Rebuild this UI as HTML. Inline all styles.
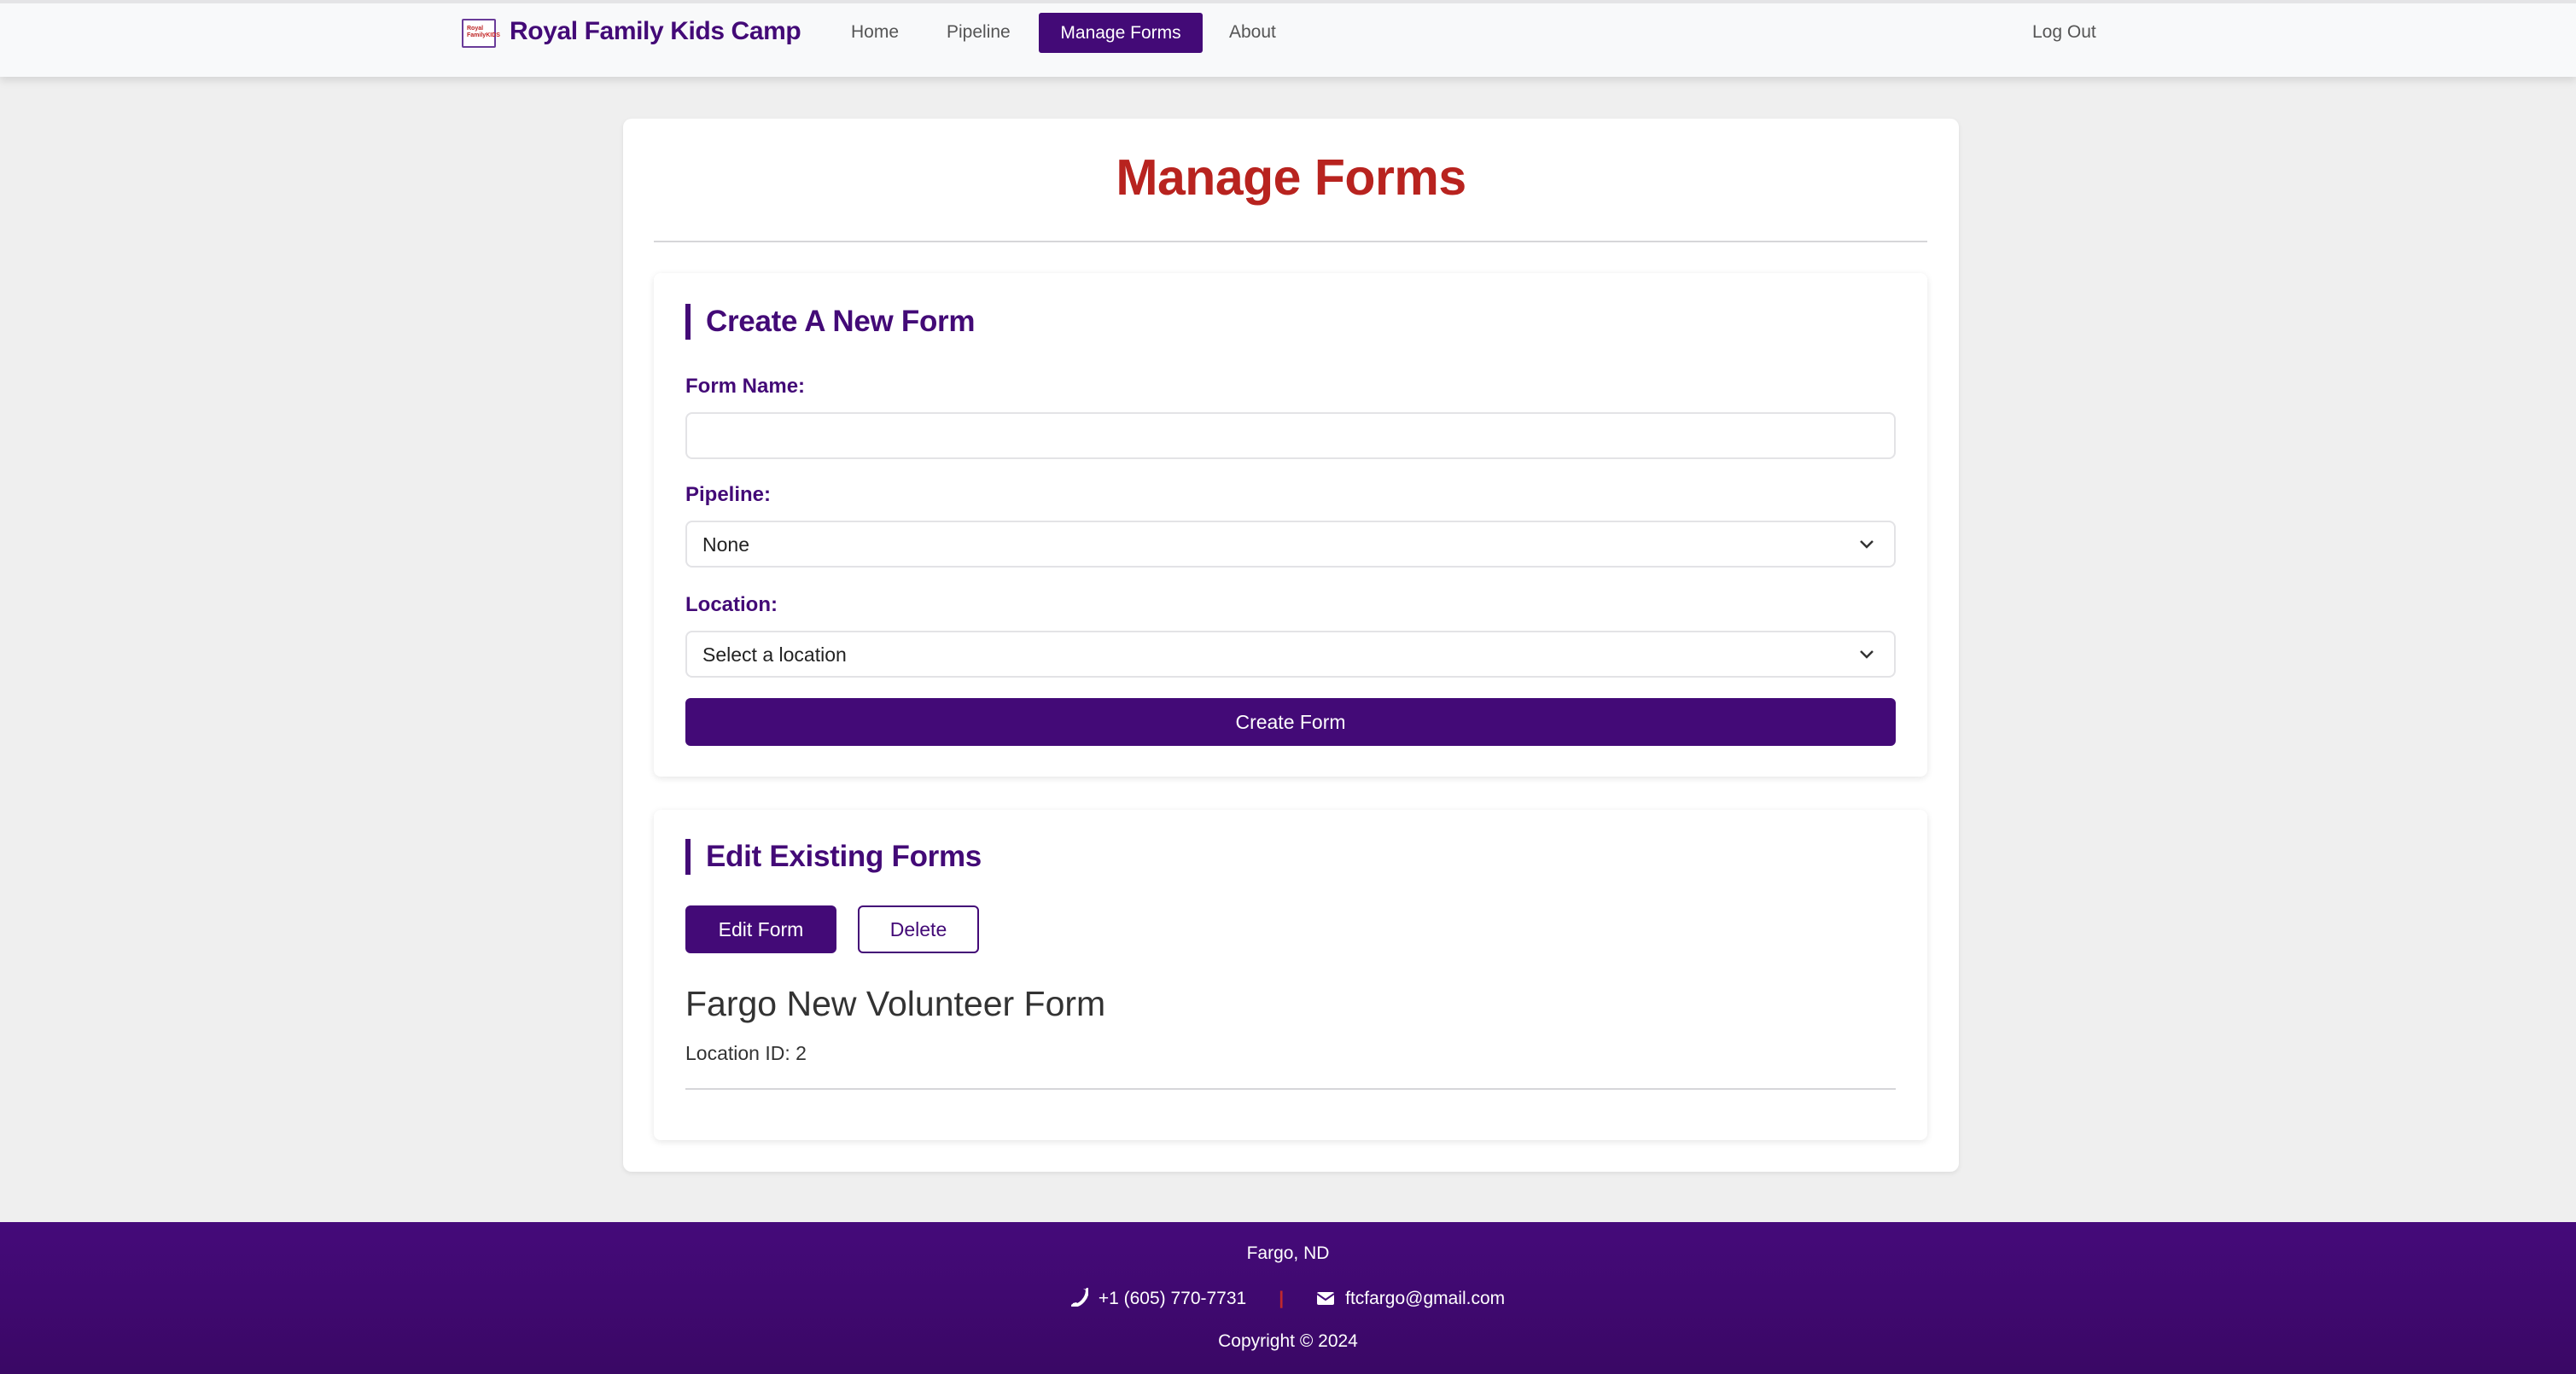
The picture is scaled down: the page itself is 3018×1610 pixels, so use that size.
<!DOCTYPE html>
<html><head><meta charset="utf-8"><style>
*{box-sizing:border-box;margin:0;padding:0}
body{width:3018px;height:1610px;background:#efefef;font-family:"Liberation Sans",Arial,sans-serif;position:relative;overflow:hidden}
.a{position:absolute}
.nav{left:0;top:0;width:3018px;height:90px;background:#f8f9fa;box-shadow:0 4px 10px rgba(0,0,0,.12);border-top:4px solid #e4e4e6}
.nl{font-size:21px;color:#555;top:26px}
.card{left:730px;top:139px;width:1565px;height:1234px;background:#fff;border-radius:10px;box-shadow:0 2px 6px rgba(0,0,0,.08)}
.sec{left:766px;width:1492px;background:#fff;border-radius:8px;box-shadow:0 2px 8px rgba(0,0,0,.1)}
.h2{font-size:35px;font-weight:bold;color:#430a77;border-left:6px solid #430a77;padding-left:18px;line-height:42px;left:803px;letter-spacing:-0.3px}
.lbl{font-size:24px;font-weight:bold;color:#430a77;left:803px}
.inp{left:803px;width:1418px;height:55px;border:2px solid #e3e3e6;border-radius:8px;background:#fff;font-size:23px;color:#222;padding:13px 0 0 18px}
.chev{position:absolute;right:22px;top:18px}
.ft{font-size:21px;color:#fff;width:3018px;text-align:center;left:0}
</style></head><body>
<div class="a nav"></div>
<div class="a" style="left:541px;top:22px;width:40px;height:34px;background:#fff;border:2px solid #6a3c99;border-radius:2px"><div style="margin:6px 4px;font-size:7px;color:#b22;font-weight:bold;line-height:8px">Royal<br>Family<span style="color:#c22">KIDS</span></div></div>
<div class="a" style="left:597px;top:20px;font-size:30px;font-weight:bold;color:#430a77;letter-spacing:-0.4px">Royal Family Kids Camp</div>
<div class="a nl" style="left:997px">Home</div>
<div class="a nl" style="left:1109px">Pipeline</div>
<div class="a" style="left:1217px;top:15px;width:192px;height:47px;background:#430a77;border-radius:3px;color:#fff;font-size:21px;text-align:center;line-height:47px">Manage Forms</div>
<div class="a nl" style="left:1440px">About</div>
<div class="a nl" style="left:2381px">Log Out</div>

<div class="a card"></div>
<div class="a" style="left:730px;width:1565px;top:174px;text-align:center;font-size:59px;font-weight:bold;color:#b8231f;letter-spacing:-0.5px">Manage Forms</div>
<div class="a" style="left:766px;top:282px;width:1492px;height:2px;background:#d6d6d9"></div>

<div class="a sec" style="top:320px;height:590px"></div>
<div class="a h2" style="top:356px">Create A New Form</div>
<div class="a lbl" style="top:439px">Form Name:</div>
<div class="a inp" style="top:483px"></div>
<div class="a lbl" style="top:566px">Pipeline:</div>
<div class="a inp" style="top:610px">None<svg class="chev" width="20" height="14" viewBox="0 0 20 14"><path d="M3 4l7 7 7-7" fill="none" stroke="#333" stroke-width="2.5"/></svg></div>
<div class="a lbl" style="top:695px">Location:</div>
<div class="a inp" style="top:739px">Select a location<svg class="chev" width="20" height="14" viewBox="0 0 20 14"><path d="M3 4l7 7 7-7" fill="none" stroke="#333" stroke-width="2.5"/></svg></div>
<div class="a" style="left:803px;top:818px;width:1418px;height:56px;background:#430a77;border-radius:6px;color:#fff;font-size:23px;text-align:center;line-height:56px">Create Form</div>

<div class="a sec" style="top:949px;height:387px"></div>
<div class="a h2" style="top:983px">Edit Existing Forms</div>
<div class="a" style="left:803px;top:1061px;width:177px;height:56px;background:#430a77;border-radius:6px;color:#fff;font-size:23px;text-align:center;line-height:56px">Edit Form</div>
<div class="a" style="left:1005px;top:1061px;width:142px;height:56px;border:2px solid #430a77;border-radius:6px;color:#430a77;font-size:23px;text-align:center;line-height:52px">Delete</div>
<div class="a" style="left:803px;top:1153px;font-size:41px;color:#333">Fargo New Volunteer Form</div>
<div class="a" style="left:803px;top:1221px;font-size:23px;color:#333">Location ID: 2</div>
<div class="a" style="left:803px;top:1275px;width:1418px;height:2px;background:#d6d6d9"></div>

<div class="a" style="left:0;top:1432px;width:3018px;height:178px;background:linear-gradient(#450a7a,#3a0865)"></div>
<div class="a ft" style="top:1457px">Fargo, ND</div>
<div class="a ft" style="top:1509px">
<svg width="20" height="22" viewBox="0 0 20 22" style="vertical-align:-3px;margin-right:12px"><path d="M14 1l4 1 1 5-3 2c-1 4-5 8-8 10l-2-2-4 1-1 3c9-1 16-10 16-18z" fill="#fff"/><path d="M19 2c0 10-8 19-17 19" fill="none" stroke="#fff" stroke-width="4" stroke-linecap="round"/></svg>+1 (605) 770-7731<span style="color:#c0282d;margin:0 38px;font-weight:bold">|</span><svg width="22" height="18" viewBox="0 0 22 18" style="vertical-align:-2px;margin-right:12px"><rect x="1" y="2" width="20" height="15" rx="2" fill="#fff"/><path d="M1 4l10 7 10-7" fill="none" stroke="#430a77" stroke-width="2"/></svg>ftcfargo@gmail.com</div>
<div class="a ft" style="top:1560px">Copyright © 2024</div>
</body></html>
